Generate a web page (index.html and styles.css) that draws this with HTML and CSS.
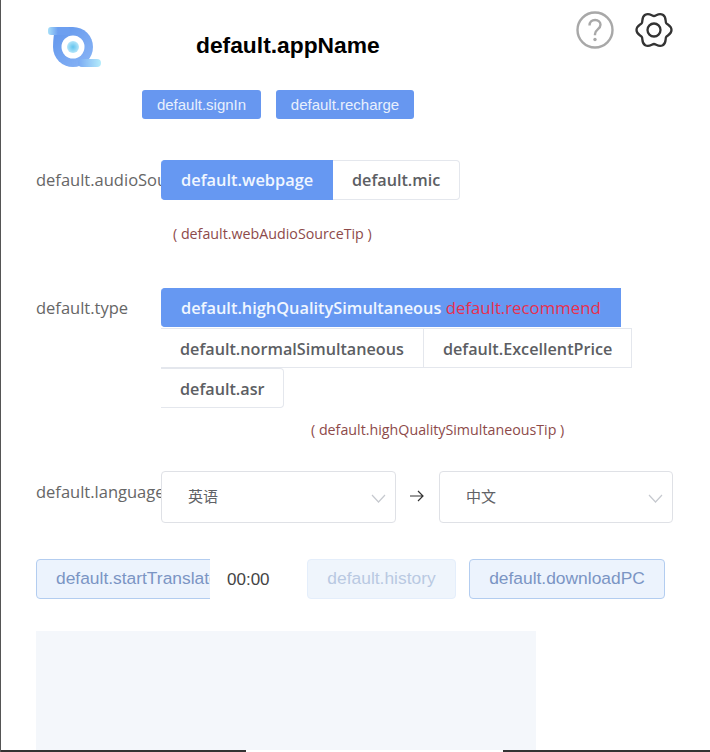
FILE: index.html
```html
<!DOCTYPE html>
<html lang="en">
<head>
<meta charset="utf-8">
<title>default.appName</title>
<link rel="stylesheet" href="styles.css">
</head>
<body>
<div class="app">
  <header class="header">
    <svg class="logo" width="58" height="44" viewBox="0 0 58 44">
      <defs>
        <linearGradient id="ring" x1="0" y1="0" x2="1" y2="1">
          <stop offset="0" stop-color="#5f94ec"/>
          <stop offset="1" stop-color="#8bb6f6"/>
        </linearGradient>
        <radialGradient id="eye">
          <stop offset="0" stop-color="#62c4ee"/>
          <stop offset="1" stop-color="#b5e6fa"/>
        </radialGradient>
        <linearGradient id="tabA" x1="0" y1="0" x2="1" y2="0">
          <stop offset="0" stop-color="#a8e0f9"/>
          <stop offset="0.45" stop-color="#6d9ff0"/>
          <stop offset="1" stop-color="#6d9ff0"/>
        </linearGradient>
        <linearGradient id="tabB" x1="0" y1="0" x2="1" y2="0">
          <stop offset="0" stop-color="#79a9f3"/>
          <stop offset="1" stop-color="#b4ecfb"/>
        </linearGradient>
      </defs>
      <path d="M10 3h18a20 20 0 0 1 20 20 20 20 0 0 1-20 20A20 20 0 0 1 8 23c0-7 1-14 2-20z" fill="url(#ring)"/>
      <rect x="3" y="3" width="22" height="8" rx="3" fill="url(#tabA)"/>
      <rect x="33" y="35" width="23" height="8" rx="4" fill="url(#tabB)"/>
      <circle cx="28" cy="23" r="11.500" fill="#fff"/>
      <circle cx="28" cy="23" r="6" fill="url(#eye)"/>
    </svg>
    <h1 class="app-name">default.appName</h1>
    <div class="header-icons">
      <svg width="38" height="38" viewBox="0 0 38 38">
        <circle cx="19" cy="19" r="17.5" fill="none" stroke="#a8a8a8" stroke-width="2.4"/>
        <path d="M13.5 14.5c0-3.400 2.400-5.500 5.600-5.500s5.400 2 5.400 4.800c0 4.600-5.500 4.600-5.500 9.200v1.200" fill="none" stroke="#a8a8a8" stroke-width="2.4"/>
        <circle cx="19" cy="28.500" r="1.700" fill="#a8a8a8"/>
      </svg>
      <svg width="38" height="38" viewBox="0 0 38 38">
        <path d="M27.750 3.840C31.650 6.090 30.120 10.270 31.120 12C32.120 13.730 36.500 14.500 36.500 19C36.500 23.500 32.120 24.270 31.120 26C30.120 27.730 31.650 31.910 27.750 34.160C23.850 36.410 21 33 19 33C17 33 14.150 36.410 10.250 34.160C6.350 31.910 7.880 27.730 6.880 26C5.880 24.270 1.500 23.500 1.500 19C1.500 14.500 5.880 13.730 6.880 12C7.880 10.270 6.350 6.090 10.250 3.840C14.150 1.590 17 5 19 5C21 5 23.850 1.590 27.750 3.840Z" fill="none" stroke="#333" stroke-width="2.300" stroke-linejoin="round"/>
        <circle cx="19" cy="19" r="6.500" fill="none" stroke="#333" stroke-width="2.300"/>
      </svg>
    </div>
  </header>

  <div class="account">
    <button class="small-btn">default.signIn</button>
    <button class="small-btn">default.recharge</button>
  </div>

  <section class="row row-audio">
    <div class="label">default.audioSource</div>
    <div class="control">
      <div class="radios">
        <span class="radio on first narrow">default.webpage</span><span class="radio last">default.mic</span>
      </div>
      <p class="tip tip-audio">( default.webAudioSourceTip )</p>
    </div>
  </section>

  <section class="row row-type">
    <div class="label">default.type</div>
    <div class="control">
      <div class="radios stack">
        <div class="line"><span class="radio on first wide">default.highQualitySimultaneous <em class="rec">default.recommend</em></span></div>
        <div class="line"><span class="radio open">default.normalSimultaneous</span><span class="radio">default.ExcellentPrice</span></div>
        <div class="line"><span class="radio open last short">default.asr</span></div>
      </div>
      <p class="tip tip-type">( default.highQualitySimultaneousTip )</p>
    </div>
  </section>

  <section class="row row-lang">
    <div class="label">default.language</div>
    <div class="langs">
      <div class="select"><span>英语</span>
        <svg width="15" height="9" viewBox="0 0 15 9"><path d="M1 1l6.500 7L14 1" fill="none" stroke="#c6c9cf" stroke-width="1.200"/></svg>
      </div>
      <svg class="arrow" width="14" height="12" viewBox="0 0 14 12"><path d="M0 6h13M8 1l5 5-5 5" fill="none" stroke="#333" stroke-width="1.200"/></svg>
      <div class="select second"><span>中文</span>
        <svg width="15" height="9" viewBox="0 0 15 9"><path d="M1 1l6.500 7L14 1" fill="none" stroke="#c6c9cf" stroke-width="1.200"/></svg>
      </div>
    </div>
  </section>

  <div class="actions">
    <div class="clip"><button class="btn start">default.startTranslate</button></div>
    <span class="timer">00:00</span>
    <button class="btn disabled">default.history</button>
    <button class="btn">default.downloadPC</button>
  </div>

  <div class="panel"></div>
  <div class="bottom-bar"><i></i><b></b><i></i></div>
</div>
</body>
</html>
```
FILE: styles.css
```css
* { box-sizing: border-box; }
html, body { margin: 0; padding: 0; height: 100%; overflow: hidden; background: #fff; }
body { font-family: "Open Sans", "Noto Sans CJK SC", sans-serif; color: #606266; }
.app { position: relative; width: 710px; height: 752px; padding: 0 0 0 35px; border-left: 1px solid #555; overflow: hidden; }

.header { height: 90px; display: flex; align-items: flex-start; margin-left: -35px; position: relative; }
.logo { margin: 24px 0 0 44px; flex: none; filter: blur(0.6px); }
.app-name { margin: 30px 0 0 93px; font: 700 22.8px/30px "Liberation Sans", sans-serif; color: #000; }
.header-icons { margin: 11px 0 0 auto; padding-right: 37px; display: flex; gap: 21px; }

.account { display: flex; gap: 15px; padding-left: 106px; }
.small-btn { width: 119px; height: 29px; padding: 0; border: 0; border-radius: 3px; background: #6797f0; color: #e8f0fd; font: 15px/29px "Liberation Sans", sans-serif; }
.small-btn + .small-btn { width: 138px; }

.row { display: flex; align-items: flex-start; }
.row-audio { margin-top: 41px; }
.row-type { margin-top: 44px; }
.row-lang { margin-top: 31px; }
.row-lang .label { padding-top: 1px; }
.label { width: 125px; flex: none; overflow: hidden; white-space: nowrap; font-size: 16.5px; line-height: 40px; color: #666; }
.control { flex: none; }

.radios { display: flex; }
.stack { flex-direction: column; }
.line { display: flex; height: 40px; }
.radio { height: 40px; padding: 0 19px; border: 1px solid #e4e7ed; border-left: 0; background: #fff; font-size: 16.2px; font-weight: 600; line-height: 38px; color: #5c5e63; white-space: nowrap; }
.line .radio { line-height: 40px; }
.radio.on { background: #6698f2; border-color: #6698f2; color: #f0f6ff; padding: 0 20px; }
.radio.first { border-radius: 4px 0 0 4px; }
.radio.last { border-radius: 0 4px 4px 0; }
.radio.narrow { width: 172px; font-size: 16.4px; }
.line .radio.wide { width: 460px; height: 39px; line-height: 38px; font-size: 16.35px; }
.radio.open { border-left: 0; }
.radio.short { padding-right: 18px; }
.rec { font-style: normal; font-weight: 400; font-size: 16.8px; color: #e8304f; }

.tip { margin: 0; font-size: 14.25px; line-height: 20px; color: #8d4a4a; }
.tip-audio { margin-top: 24px; padding-left: 12px; }
.tip-type { margin-top: 12px; padding-left: 150px; }

.langs { display: flex; align-items: center; }
.select { width: 235px; height: 52px; padding: 0 9px 0 26px; border: 1px solid #dfe1e6; border-radius: 4px; display: flex; align-items: center; justify-content: space-between; font-size: 15px; color: #606266; }
.select span { margin-top: -4px; }
.select svg { margin-top: 2px; }
.select.second { width: 234px; }
.arrow { flex: none; margin: -2px 15px 0 14px; }

.actions { margin-top: 36px; display: flex; align-items: center; }
.clip { width: 174px; height: 40px; overflow: hidden; flex: none; }
.btn { height: 40px; padding: 0 19px 2px; border: 1px solid #b3cdf0; border-radius: 4px; background: #ecf3fd; color: #7b95c4; font: 17.4px/36px "Liberation Sans", sans-serif; white-space: nowrap; }
.start { width: 220px; text-align: left; }
.timer { width: 97px; height: 40px; padding: 1px 0 0 17px; flex: none; font: 500 17px/40px "Liberation Sans", sans-serif; color: #444; }
.disabled { width: 149px; padding: 0 0 2px; border-color: #e4eefb; background: #eff5fc; color: #b9c9e2; }
.btn + .btn { margin-left: 13px; width: 196px; padding: 0 0 2px; }

.panel { margin-top: 32px; width: 500px; height: 130px; background: #f4f7fb; }

.bottom-bar { position: absolute; left: 0; right: 0; bottom: 0; height: 2px; display: flex; }
.bottom-bar i { display: block; background: #333; flex: 1 1 0; }
.bottom-bar i:first-child { flex: 0 0 245px; }
.bottom-bar b { display: block; flex: 0 0 257px; background: #fff; }
```
